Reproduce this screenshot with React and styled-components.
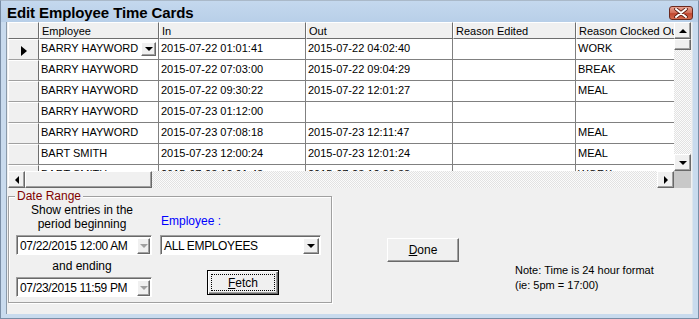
import styled, { createGlobalStyle } from "styled-components";

const Global = createGlobalStyle`
  html, body { margin: 0; padding: 0; background: #fff; }
  body { font-family: "Liberation Sans", Arial, sans-serif; font-size: 11px; color: #000; }
`;

const rows = [
  { emp: "BARRY HAYWORD", tin: "2015-07-22 01:01:41", tout: "2015-07-22 04:02:40", edited: "", reason: "WORK" },
  { emp: "BARRY HAYWORD", tin: "2015-07-22 07:03:00", tout: "2015-07-22 09:04:29", edited: "", reason: "BREAK" },
  { emp: "BARRY HAYWORD", tin: "2015-07-22 09:30:22", tout: "2015-07-22 12:01:27", edited: "", reason: "MEAL" },
  { emp: "BARRY HAYWORD", tin: "2015-07-23 01:12:00", tout: "", edited: "", reason: "" },
  { emp: "BARRY HAYWORD", tin: "2015-07-23 07:08:18", tout: "2015-07-23 12:11:47", edited: "", reason: "MEAL" },
  { emp: "BART SMITH", tin: "2015-07-23 12:00:24", tout: "2015-07-23 12:01:24", edited: "", reason: "MEAL" },
  { emp: "BART SMITH", tin: "2015-07-23 12:01:43", tout: "2015-07-23 12:03:38", edited: "", reason: "WORK" },
];

export default function App() {
  return (
    <>
      <Global />
      <Window>
        <TitleBar>
          <Title>Edit Employee Time Cards</Title>
          <CloseBtn>
            <svg width="14" height="10" viewBox="0 0 14 10">
              <path d="M2 1 L12 9 M12 1 L2 9" stroke="#5a1a10" strokeWidth="3.6" strokeLinecap="round" />
              <path d="M2 1 L12 9 M12 1 L2 9" stroke="#fff" strokeWidth="2" strokeLinecap="round" />
            </svg>
          </CloseBtn>
        </TitleBar>
        <Client>
          <Grid>
            <Table>
              <HeadRow>
                <HeadCell />
                <HeadCell>Employee</HeadCell>
                <HeadCell>In</HeadCell>
                <HeadCell>Out</HeadCell>
                <HeadCell>Reason Edited</HeadCell>
                <HeadCell>Reason Clocked Out</HeadCell>
              </HeadRow>
              {rows.map((r, i) => (
                <Row key={i}>
                  <RowHead>{i === 0 && <Pointer />}</RowHead>
                  <Cell>
                    {r.emp}
                    {i === 0 && (
                      <CellDrop>
                        <Arrow dir="down" />
                      </CellDrop>
                    )}
                  </Cell>
                  <Cell>{r.tin}</Cell>
                  <Cell>{r.tout}</Cell>
                  <Cell>{r.edited}</Cell>
                  <Cell>{r.reason}</Cell>
                </Row>
              ))}
            </Table>
            <VScroll>
              <ScrollBtn><Arrow dir="up" /></ScrollBtn>
              <Thumb $v />
              <Track />
              <ScrollBtn><Arrow dir="down" /></ScrollBtn>
            </VScroll>
            <HScroll>
              <ScrollBtn><Arrow dir="left" /></ScrollBtn>
              <Thumb />
              <Track />
              <ScrollBtn><Arrow dir="right" /></ScrollBtn>
            </HScroll>
            <Corner />
          </Grid>

          <Bottom>
            <Group>
              <Legend>Date Range</Legend>
              <GroupBody>
                <Col>
                  <Caption>Show entries in the<br />period beginning</Caption>
                  <Field $w={136}>
                    <span>07/22/2015 12:00 AM</span>
                    <DropBtn><Arrow dir="down" $muted /></DropBtn>
                  </Field>
                  <Caption $small>and ending</Caption>
                  <Field $w={136}>
                    <span>07/23/2015 11:59 PM</span>
                    <DropBtn><Arrow dir="down" $muted /></DropBtn>
                  </Field>
                </Col>
                <Col $right>
                  <EmpLabel>Employee :</EmpLabel>
                  <Field $w={161}>
                    <span>ALL EMPLOYEES</span>
                    <DropBtn $wide><Arrow dir="down" /></DropBtn>
                  </Field>
                  <FetchBtn>
                    <Focus><u>F</u>etch</Focus>
                  </FetchBtn>
                </Col>
              </GroupBody>
            </Group>
            <DoneBtn><u>D</u>one</DoneBtn>
            <Note>
              Note: Time is 24 hour format
              <br />
              (ie: 5pm = 17:00)
            </Note>
          </Bottom>
        </Client>
      </Window>
    </>
  );
}

const Window = styled.div`
  width: 699px;
  height: 319px;
  box-sizing: border-box;
  display: flex;
  flex-direction: column;
  background: #c9dbee;
  border: 1px solid #7a8ea6;
  border-top-color: #aab9c9;
`;

const TitleBar = styled.div`
  height: 21px;
  display: flex;
  align-items: center;
  justify-content: space-between;
  padding: 0 5px 0 6px;
  background: linear-gradient(#c4d8ee, #b8cfe8);
`;

const Title = styled.div`
  font-size: 15px;
  font-weight: bold;
  letter-spacing: -0.1px;
  padding-top: 1px;
`;

const CloseBtn = styled.div`
  width: 24px;
  height: 14px;
  margin-top: 2px;
  box-sizing: border-box;
  border: 1px solid #6b2a20;
  border-radius: 3px;
  display: flex;
  align-items: center;
  justify-content: center;
  background: linear-gradient(#e8a493, #d26b55 50%, #c0452e 55%, #d46c50);
`;

const Client = styled.div`
  flex: 1;
  margin: 0 5px 4px 5px;
  border-left: 1px solid #8a9aaa;
  border-right: 1px solid #dde6ee;
  background: #f0f0f0;
  display: flex;
  flex-direction: column;
`;

const Grid = styled.div`
  display: grid;
  grid-template-columns: 1fr 17px;
  grid-template-rows: 1fr 17px;
  height: 166px;
  margin-left: 1px;
  background: #fff;
  border-right: 1px solid #f0f0f0;
  overflow: hidden;
`;

const Table = styled.div`
  overflow: hidden;
  background: #fff;
`;

const cols = "31px 120px 147px 147px 123px 120px";

const HeadRow = styled.div`
  display: grid;
  grid-template-columns: ${cols};
  height: 17px;
`;

const HeadCell = styled.div`
  background: #f0f0f0;
  border-right: 1px solid #6e6e6e;
  border-bottom: 1px solid #6e6e6e;
  border-top: 1px solid #fff;
  border-left: 1px solid #fff;
  padding: 1px 2px 0;
  line-height: 14px;
  white-space: nowrap;
  overflow: hidden;
`;

const Row = styled.div`
  display: grid;
  grid-template-columns: ${cols};
  height: 21px;
`;

const RowHead = styled.div`
  background: #f0f0f0;
  border-top: 1px solid #fff;
  border-left: 1px solid #fff;
  border-right: 1px solid #6e6e6e;
  border-bottom: 1px solid #a0a0a0;
  display: flex;
  align-items: center;
  justify-content: center;
`;

const Pointer = styled.div`
  width: 0;
  height: 0;
  border-left: 6px solid #000;
  border-top: 5px solid transparent;
  border-bottom: 5px solid transparent;
  margin-top: 2px;
`;

const Cell = styled.div`
  position: relative;
  border-right: 1px solid #808080;
  border-bottom: 1px solid #808080;
  padding: 2px 2px 0;
  line-height: 14px;
  white-space: nowrap;
  overflow: hidden;
`;

const raised = `
  background: #f0f0f0;
  box-sizing: border-box;
  border: 1px solid;
  border-color: #fff #696969 #696969 #fff;
  box-shadow: inset -1px -1px 0 #a0a0a0;
  display: flex;
  align-items: center;
  justify-content: center;
`;

const CellDrop = styled.div`
  ${raised}
  position: absolute;
  right: 2px;
  top: 3px;
  width: 15px;
  height: 14px;
`;

const Arrow = styled.div`
  width: 0;
  height: 0;
  ${({ dir, $muted }) => {
    const c = $muted ? "#a0a0a0" : "#000";
    if (dir === "up") return `border-bottom: 4px solid ${c}; border-left: 4px solid transparent; border-right: 4px solid transparent;`;
    if (dir === "down") return `border-top: 4px solid ${c}; border-left: 4px solid transparent; border-right: 4px solid transparent;`;
    if (dir === "left") return `border-right: 4px solid ${c}; border-top: 4px solid transparent; border-bottom: 4px solid transparent;`;
    return `border-left: 4px solid ${c}; border-top: 4px solid transparent; border-bottom: 4px solid transparent;`;
  }}
`;

const dither = `
  background-color: #fff;
  background-image: repeating-conic-gradient(#e2e2e2 0 25%, #fbfbfb 0 50%);
  background-size: 2px 2px;
`;

const VScroll = styled.div`
  display: flex;
  flex-direction: column;
  ${dither}
`;

const HScroll = styled.div`
  display: flex;
  ${dither}
`;

const ScrollBtn = styled.div`
  ${raised}
  width: 17px;
  height: 17px;
  flex: none;
`;

const Thumb = styled.div`
  ${raised}
  flex: none;
  ${({ $v }) => ($v ? "height: 11px; width: 17px;" : "width: 127px; height: 17px;")}
`;

const Track = styled.div`
  flex: 1;
`;

const Corner = styled.div`
  background: #c8c8c8;
`;

const Bottom = styled.div`
  flex: 1;
  display: flex;
  align-items: flex-start;
  padding-top: 8px;
`;

const Group = styled.fieldset`
  position: relative;
  margin: 0 0 0 1px;
  padding: 0;
  width: 324px;
  height: 107px;
  box-sizing: border-box;
  border: 1px solid #a0a0a0;
  box-shadow: 1px 1px 0 #fff, inset 1px 1px 0 #fff;
`;

const Legend = styled.div`
  position: absolute;
  left: 6px;
  top: -8px;
  padding: 0 2px;
  background: #f0f0f0;
  color: #800000;
  font-size: 12px;
  line-height: 14px;
`;

const GroupBody = styled.div`
  display: flex;
  gap: 8px;
  padding: 6px 0 0 7px;
`;

const Col = styled.div`
  display: flex;
  flex-direction: column;
  align-items: ${({ $right }) => ($right ? "flex-start" : "center")};
  width: ${({ $right }) => ($right ? "161px" : "136px")};
  padding-top: ${({ $right }) => ($right ? "11px" : "0")};
`;

const Caption = styled.div`
  text-align: center;
  font-size: 12px;
  line-height: 14px;
  padding-right: 4px;
  margin: ${({ $small }) => ($small ? "4px 0 4px" : "0 0 4px")};
`;

const EmpLabel = styled.div`
  color: #0000ff;
  font-size: 12px;
  line-height: 14px;
  margin: 0 0 7px 1px;
`;

const Field = styled.div`
  width: ${({ $w }) => $w}px;
  height: 20px;
  box-sizing: border-box;
  display: flex;
  align-items: center;
  justify-content: space-between;
  background: #fff;
  border: 1px solid;
  border-color: #a0a0a0 #fff #fff #a0a0a0;
  box-shadow: inset 1px 1px 0 #696969;
  padding: 0 1px 0 3px;
  font-size: 12px;
  letter-spacing: -0.35px;
  span { padding-top: 1px; }
`;

const DropBtn = styled.div`
  ${raised}
  width: ${({ $wide }) => ($wide ? "16px" : "13px")};
  height: 16px;
  margin-top: 1px;
`;

const FetchBtn = styled.div`
  ${raised}
  margin: 15px 0 0 47px;
  width: 72px;
  height: 25px;
  border: 1px solid #000;
  box-shadow: inset 1px 1px 0 #fff, inset -1px -1px 0 #696969, inset -2px -2px 0 #a0a0a0;
  padding: 3px;
  font-size: 12px;
`;

const Focus = styled.div`
  flex: 1;
  align-self: stretch;
  display: flex;
  align-items: center;
  justify-content: center;
  border: 1px dotted #000;
`;

const DoneBtn = styled.div`
  ${raised}
  margin: 42px 0 0 55px;
  width: 72px;
  height: 24px;
  font-size: 12px;
`;

const Note = styled.div`
  margin: 67px 0 0 56px;
  font-size: 11px;
  line-height: 15px;
`;
